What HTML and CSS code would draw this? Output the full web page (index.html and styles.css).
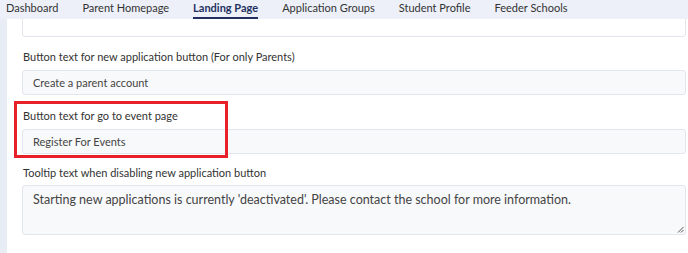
FILE: index.html
```html
<!DOCTYPE html>
<html>
<head>
<meta charset="utf-8">
<link rel="stylesheet" href="styles.css">
</head>
<body>
<nav class="tabs">
  <span class="tab">Dashboard</span>
  <span class="tab">Parent Homepage</span>
  <span class="tab active">Landing Page</span>
  <span class="tab">Application Groups</span>
  <span class="tab">Student Profile</span>
  <span class="tab">Feeder Schools</span>
</nav>
<div class="page">
  <div class="strip"></div>
  <main class="main">
    <div class="input cut"></div>
    <div class="field">
      <div class="label">Button text for new application button (For only Parents)</div>
      <div class="input">Create a parent account</div>
    </div>
    <div class="field highlighted">
      <div class="label">Button text for go to event page</div>
      <div class="input">Register For Events</div>
      <div class="callout"></div>
    </div>
    <div class="field last">
      <div class="label">Tooltip text when disabling new application button</div>
      <div class="textarea">Starting new applications is currently 'deactivated'. Please contact the school for more information.
        <svg class="grip" width="7" height="7" viewBox="0 0 7 7"><path d="M6.5 1 L1 6.5 M6.5 4 L4 6.5" stroke="#555" stroke-width="1" fill="none"/></svg>
      </div>
    </div>
  </main>
</div>
</body>
</html>
```
FILE: styles.css
```css
* { box-sizing: border-box; }
html, body { margin: 0; padding: 0; background: #fff; }
body {
  font-family: Lato, "Open Sans", "Liberation Sans", sans-serif;
  color: #333;
  width: 688px;
  height: 253px;
  overflow: hidden;
}
.tabs {
  height: 19px;
  background: #edf0f8;
  display: flex;
  align-items: stretch;
  padding-left: 6px;
  gap: 24px;
  font-size: 11px;
  color: #333;
}
.tab {
  line-height: 16px;
  border-bottom: 2px solid transparent;
}
.tab.active {
  font-weight: 700;
  color: #23305f;
  border-bottom-color: #23305f;
}
.page {
  display: flex;
  height: 234px;
}
.strip {
  width: 7px;
  background: #e8ecf5;
  flex: none;
}
.main {
  flex: 1;
  padding: 0 2px 0 15px;
  overflow: hidden;
}
.input {
  height: 25px;
  background: #f8f9fb;
  border: 1px solid #e3e6ed;
  border-radius: 3px;
  font-size: 11px;
  line-height: 23px;
  padding-left: 10px;
  color: #444;
}
.input.cut {
  margin-top: -7px;
  background: #fff;
}
.field { margin-top: 13px; position: relative; }
.label {
  font-size: 11px;
  line-height: 14px;
  margin-bottom: 6px;
  padding-left: 1px;
  color: #333;
}
.highlighted { margin-top: 14px; }
.last { margin-top: 12px; }
.last .label { margin-bottom: 5px; }
.callout {
  position: absolute;
  left: -8px;
  top: -8px;
  width: 214px;
  height: 57px;
  border: 3px solid #e8202a;
}
.textarea {
  position: relative;
  height: 50px;
  background: #f8f9fb;
  border: 1px solid #e3e6ed;
  border-radius: 3px;
  font-size: 12.5px;
  line-height: 16px;
  padding: 6px 10px;
  color: #444;
}
.grip { position: absolute; right: 1px; bottom: 1px; }
```
